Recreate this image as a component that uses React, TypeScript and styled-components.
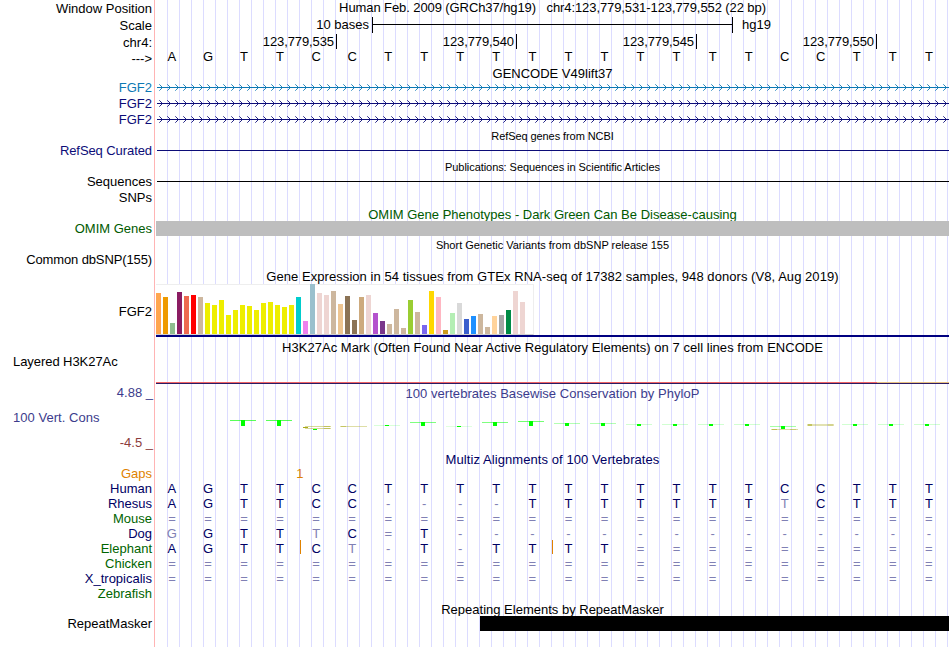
import React from "react";
import styled, { createGlobalStyle } from "styled-components";

const GlobalStyle = createGlobalStyle`
  body {
    margin: 0;
    background: #ffffff;
  }
`;

const Browser = styled.div`
  width: 949px;
  height: 647px;
  overflow: hidden;
  font-family: "Liberation Sans", Arial, sans-serif;
  font-size: 13px;
  line-height: 15px;
  color: #000000;
  white-space: pre;
  background: linear-gradient(#ffb4b4, #ffb4b4) 154px 0 / 1px 100% no-repeat,
    repeating-linear-gradient(
        90deg,
        #dcdcff 0,
        #dcdcff 1px,
        transparent 1px,
        transparent 12px
      )
      167px 0 / 792px 100% no-repeat;
`;

const Row = styled.div<{ $h: number }>`
  display: flex;
  height: ${(p) => p.$h}px;
`;

const Label = styled.div<{
  $top?: number;
  $color?: string;
  $left?: boolean;
  $spacing?: number;
}>`
  box-sizing: border-box;
  flex: none;
  width: 156px;
  padding-top: ${(p) => p.$top ?? 0}px;
  padding-right: 4px;
  padding-left: 13px;
  text-align: ${(p) => (p.$left ? "left" : "right")};
  letter-spacing: ${(p) => p.$spacing ?? 0}px;
  color: ${(p) => p.$color ?? "inherit"};
`;

const Track = styled.div`
  flex: none;
  width: 793px;
`;

const Title = styled.div<{
  $h: number;
  $top?: number;
  $color?: string;
  $small?: boolean;
  $clip?: boolean;
  $spacing?: number;
}>`
  box-sizing: border-box;
  height: ${(p) => p.$h}px;
  margin-left: 156px;
  padding-top: ${(p) => p.$top ?? 0}px;
  overflow: ${(p) => (p.$clip ? "hidden" : "visible")};
  text-align: center;
  font-size: ${(p) => (p.$small ? 11 : 13)}px;
  letter-spacing: ${(p) => p.$spacing ?? 0}px;
  color: ${(p) => p.$color ?? "inherit"};
`;

const PositionText = styled.div`
  text-align: center;
  letter-spacing: -0.09px;
`;

const ScaleTrack = styled(Track)`
  display: flex;
`;

const ScaleText = styled.div`
  width: 213px;
  padding-right: 3px;
  text-align: right;
`;

const ScaleBar = styled.div`
  box-sizing: border-box;
  width: 361px;
  height: 16px;
  margin-right: 9px;
  border: solid #000000;
  border-width: 0 1px;
  background: linear-gradient(#000000, #000000) 0 7px / 100% 1px no-repeat;
`;

const Ticks = styled(Track)`
  display: grid;
  grid-template-columns: 181px repeat(3, 180px);
`;

const Tick = styled.div`
  border-right: 1px solid #000000;
  padding: 1px 2px 0 0;
  line-height: 14px;
  text-align: right;
  letter-spacing: -0.1px;
`;

const Bases = styled(Track)`
  display: grid;
  grid-template-columns: repeat(22, 1fr);
`;

const Base = styled.div<{ $color?: string; $gap?: boolean }>`
  position: relative;
  padding-right: 4.2px;
  text-align: center;
  color: ${(p) => p.$color ?? "inherit"};

  &::before {
    content: "";
    display: ${(p) => (p.$gap ? "block" : "none")};
    position: absolute;
    left: -0.5px;
    top: -1px;
    width: 1px;
    height: 14px;
    background: #e08200;
  }
`;

const GapCount = styled.div`
  grid-column: 5;
  margin-left: -4px;
  color: #e08200;
`;

const Line = styled.div<{ $color: string }>`
  height: 1px;
  margin: 7px 0 0 1px;
  background: ${(p) => p.$color};
`;

const Block = styled.div<{ $color: string; $start?: number }>`
  height: 15px;
  margin-left: ${(p) => p.$start ?? 0}px;
  background: ${(p) => p.$color};
`;

const Gtex = styled(Track)`
  height: 51px;
  border-bottom: 2px solid #000080;
`;

const GtexChart = styled.div`
  box-sizing: border-box;
  display: flex;
  align-items: flex-end;
  gap: 2px;
  width: 378px;
  height: 51px;
  background: #ffffff;
  border: solid #eeeeee;
  border-width: 1px 1px 1px 0;
  border-bottom-color: #d0d0d0;
`;

const Bar = styled.div`
  flex: none;
  width: 5px;
`;

const H3K = styled(Track)`
  padding-top: 28px;
`;

const H3KLine = styled.div`
  height: 1px;
  background: linear-gradient(90deg, #f06464 721px, #e8c080 721px);
  border-bottom: 1px solid #2c1c64;
`;

const ConsLabels = styled.div`
  box-sizing: border-box;
  flex: none;
  width: 156px;
  padding: 1px 3px 0 13px;
  color: #3c3c8c;
`;

const Limit = styled.div<{ $color?: string }>`
  text-align: right;
  color: ${(p) => p.$color ?? "inherit"};
`;

const ConsName = styled.div`
  padding: 10px 0;
  letter-spacing: 0.04px;
`;

const ConsTitle = styled.div`
  padding-top: 2px;
  text-align: center;
  letter-spacing: 0.04px;
  color: #3c3c8c;
`;

const ConsPlot = styled.svg`
  display: block;
  margin-top: 12px;
`;

const IntronLine = styled.svg`
  display: block;
`;

const NAVY = "#0c0c78";
const DARK = "#000064";
const GREEN = "#006400";
const PALE = "#8080b4";

const REFERENCE = "AGTTCCTTTTTTTTTTTCCTTT";

const genes = [
  { name: "FGF2", color: "#0c78b4" },
  { name: "FGF2", color: NAVY },
  { name: "FGF2", color: NAVY },
];

// lower case marks a base that differs from the reference
const species: { name: string; color: string; seq: string; gaps?: number[] }[] =
  [
    { name: "Human", color: DARK, seq: "AGTTCCTTTTTTTTTTTCCTTT" },
    { name: "Rhesus", color: DARK, seq: "AGTTCC----TTTTTTTtCTTT" },
    { name: "Mouse", color: GREEN, seq: "======================" },
    { name: "Dog", color: DARK, seq: "gGTTtC=T--------------" },
    {
      name: "Elephant",
      color: GREEN,
      seq: "AGTTCt-T-TTTT=========",
      gaps: [4, 11],
    },
    { name: "Chicken", color: GREEN, seq: "======================" },
    { name: "X_tropicalis", color: DARK, seq: "======================" },
    { name: "Zebrafish", color: GREEN, seq: "" },
  ];

const tissues: [number, string][] = [
  [41, "#ffa54f"],
  [37, "#ee9a00"],
  [11, "#8fbc8f"],
  [42, "#8b1c62"],
  [38, "#ee6a50"],
  [39, "#ff0000"],
  [37, "#cdb79e"],
  [31, "#eeee00"],
  [29, "#eeee00"],
  [34, "#eeee00"],
  [19, "#eeee00"],
  [24, "#eeee00"],
  [29, "#eeee00"],
  [28, "#eeee00"],
  [24, "#eeee00"],
  [31, "#eeee00"],
  [32, "#eeee00"],
  [29, "#eeee00"],
  [27, "#eeee00"],
  [29, "#eeee00"],
  [37, "#00cdcd"],
  [13, "#ee82ee"],
  [50, "#9ac0cd"],
  [41, "#eed5d2"],
  [39, "#eed5d2"],
  [43, "#cdb79e"],
  [30, "#eec591"],
  [38, "#8b7355"],
  [14, "#8b7355"],
  [37, "#cdaa7d"],
  [39, "#eed5d2"],
  [21, "#b452cd"],
  [13, "#7a378b"],
  [10, "#cdb79e"],
  [25, "#cdb79e"],
  [6, "#cdb79e"],
  [34, "#9acd32"],
  [22, "#cdb79e"],
  [9, "#7a67ee"],
  [43, "#ffd700"],
  [37, "#ffb6c1"],
  [4, "#cd9b1d"],
  [21, "#b4eeb4"],
  [31, "#d9d9d9"],
  [15, "#3a5fcd"],
  [18, "#1e90ff"],
  [20, "#cdb79e"],
  [7, "#cdb79e"],
  [18, "#ffd39b"],
  [19, "#a6a6a6"],
  [24, "#008b45"],
  [43, "#eed5d2"],
  [32, "#eed5d2"],
  [0, "#ff00ff"],
];

// column, top, stem height, opacity of the cross bar
const scores: [number, number, number, number][] = [
  [2, 13, 6, 0.65],
  [3, 13, 6, 0.65],
  [6, 18, 1, 0.15],
  [7, 15, 4, 0.5],
  [8, 19, 1, 0.12],
  [9, 15, 4, 0.5],
  [10, 14, 5, 0.55],
  [11, 16, 3, 0.3],
  [12, 16, 3, 0.3],
  [13, 17, 2, 0.18],
  [14, 17, 2, 0.18],
  [15, 17, 2, 0.18],
  [16, 17, 2, 0.18],
  [17, 19, 3, 0.35],
  [19, 17, 2, 0.18],
  [20, 17, 2, 0.18],
  [21, 17, 2, 0.18],
];

const Intron = ({ color, id }: { color: string; id: string }) => (
  <IntronLine width="793" height="16">
    <defs>
      <pattern id={id} width="8" height="16" patternUnits="userSpaceOnUse">
        <path
          d="M3.3 4.3L6.5 7.5L3.3 10.7"
          fill="none"
          stroke={color}
          strokeWidth="0.9"
        />
      </pattern>
    </defs>
    <rect width="793" height="16" fill={`url(#${id})`} />
    <rect x="1" y="7" width="792" height="1" fill={color} />
  </IntronLine>
);

const Conservation = () => (
  <ConsPlot width="793" height="39" shapeRendering="crispEdges">
    {scores.map(([col, top, stem, opacity]) => (
      <g key={col} transform={`translate(${col * 36 + 2} ${top - 6})`}>
        <rect width="26" height="1" fill="#00ff00" opacity={opacity} />
        <rect x="11" width="4" height={stem} fill="#00ff00" />
      </g>
    ))}
    <g fill="#a0a000">
      <rect x="149" y="13" width="26" height="1" opacity="0.4" />
      <rect x="147" y="14" width="5" height="1" opacity="0.9" />
      <rect x="149" y="15" width="26" height="1" opacity="0.4" />
      <rect x="168" y="13" width="6" height="1" opacity="0.4" />
      <rect x="168" y="15" width="6" height="1" opacity="0.4" />
      <rect x="184" y="13" width="27" height="1" opacity="0.35" />
      <rect x="185" y="13" width="5" height="1" opacity="0.4" />
      <rect x="615" y="16" width="27" height="1" opacity="0.35" />
      <rect x="616" y="16" width="5" height="1" opacity="0.5" />
      <rect x="634" y="16" width="6" height="1" opacity="0.3" />
      <rect x="651" y="11" width="27" height="2" opacity="0.3" />
      <rect x="652" y="11" width="4" height="2" opacity="0.45" />
      <rect x="672" y="11" width="5" height="2" opacity="0.2" />
    </g>
    <rect x="157" y="16" width="4" height="1" fill="#00ff00" />
  </ConsPlot>
);

const App: React.FC = () => {
  return (
    <>
      <GlobalStyle />
      <Browser>
        <Row $h={17}>
          <Label $top={1}>Window Position</Label>
          <Track>
            <PositionText>
              {"Human Feb. 2009 (GRCh37/hg19)   chr4:123,779,531-123,779,552 (22 bp)"}
            </PositionText>
          </Track>
        </Row>
        <Row $h={17}>
          <Label $top={1}>Scale</Label>
          <ScaleTrack>
            <ScaleText>10 bases</ScaleText>
            <ScaleBar />
            <div>hg19</div>
          </ScaleTrack>
        </Row>
        <Row $h={15}>
          <Label $top={1}>chr4:</Label>
          <Ticks>
            {["535", "540", "545", "550"].map((end) => (
              <Tick key={end}>{`123,779,${end}`}</Tick>
            ))}
          </Ticks>
        </Row>
        <Row $h={17}>
          <Label $top={2}>{"--->"}</Label>
          <Bases>
            {REFERENCE.split("").map((base, i) => (
              <Base key={i}>{base}</Base>
            ))}
          </Bases>
        </Row>

        <Title $h={14}>GENCODE V49lift37</Title>
        {genes.map((gene, i) => (
          <Row $h={16} key={i}>
            <Label $color={gene.color}>{gene.name}</Label>
            <Track>
              <Intron color={gene.color} id={`intron${i}`} />
            </Track>
          </Row>
        ))}

        <Title $h={15} $top={1} $small $spacing={-0.08}>
          RefSeq genes from NCBI
        </Title>
        <Row $h={16}>
          <Label $color={NAVY} $spacing={-0.08}>
            RefSeq Curated
          </Label>
          <Track>
            <Line $color={NAVY} />
          </Track>
        </Row>

        <Title $h={15} $top={1} $small $spacing={-0.06}>
          Publications: Sequences in Scientific Articles
        </Title>
        <Row $h={16}>
          <Label>Sequences</Label>
          <Track>
            <Line $color="#000000" />
          </Track>
        </Row>
        <Row $h={16}>
          <Label>SNPs</Label>
        </Row>

        <Title $h={15} $top={1} $color="#005a00" $clip>
          OMIM Gene Phenotypes - Dark Green Can Be Disease-causing
        </Title>
        <Row $h={16}>
          <Label $color="#005a00">OMIM Genes</Label>
          <Track>
            <Block $color="#bebebe" />
          </Track>
        </Row>

        <Title $h={15} $top={1} $small>
          Short Genetic Variants from dbSNP release 155
        </Title>
        <Row $h={16}>
          <Label $spacing={-0.12}>Common dbSNP(155)</Label>
        </Row>

        <Title $h={16} $top={1} $spacing={0.055}>
          Gene Expression in 54 tissues from GTEx RNA-seq of 17382 samples, 948
          {" donors (V8, Aug 2019)"}
        </Title>
        <Row $h={53}>
          <Label $top={20}>FGF2</Label>
          <Gtex>
            <GtexChart>
              {tissues.map(([height, background], i) => (
                <Bar key={i} style={{ height, background }} />
              ))}
            </GtexChart>
          </Gtex>
        </Row>

        <Title $h={17} $top={3} $spacing={0.04}>
          H3K27Ac Mark (Often Found Near Active Regulatory Elements) on 7 cell
          {" lines from ENCODE"}
        </Title>
        <Row $h={30}>
          <Label $left $spacing={-0.06}>
            Layered H3K27Ac
          </Label>
          <H3K>
            <H3KLine />
          </H3K>
        </Row>

        <Row $h={68}>
          <ConsLabels>
            <Limit>4.88 _</Limit>
            <ConsName>100 Vert. Cons</ConsName>
            <Limit $color="#8c3c3c">-4.5 _</Limit>
          </ConsLabels>
          <Track>
            <ConsTitle>100 vertebrates Basewise Conservation by PhyloP</ConsTitle>
            <Conservation />
          </Track>
        </Row>

        <Title $h={14} $color={DARK} $spacing={0.08}>
          Multiz Alignments of 100 Vertebrates
        </Title>
        <Row $h={15}>
          <Label $color="#e08200">Gaps</Label>
          <Bases>
            <GapCount>1</GapCount>
          </Bases>
        </Row>
        {species.map(({ name, color, seq, gaps }) => (
          <Row $h={15} key={name}>
            <Label $color={color}>{name}</Label>
            <Bases>
              {seq.split("").map((base, i) => (
                <Base
                  key={i}
                  $color={/[A-Z]/.test(base) ? DARK : PALE}
                  $gap={gaps?.includes(i)}
                >
                  {base.toUpperCase()}
                </Base>
              ))}
            </Bases>
          </Row>
        ))}

        <Title $h={15} $top={1} $clip>
          Repeating Elements by RepeatMasker
        </Title>
        <Row $h={31}>
          <Label>RepeatMasker</Label>
          <Track>
            <Block $color="#000000" $start={324} />
          </Track>
        </Row>
      </Browser>
    </>
  );
};

export default App;
